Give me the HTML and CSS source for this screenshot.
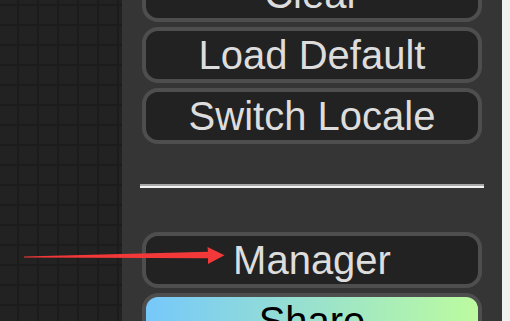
FILE: index.html
```html
<!DOCTYPE html>
<html>
<head>
<meta charset="utf-8">
<link rel="stylesheet" href="styles.css">
</head>
<body>
<div class="app">
  <div class="canvas"></div>
  <div class="panel">
    <div class="menu">
      <button class="btn">Clear</button>
      <button class="btn">Load Default</button>
      <button class="btn">Switch Locale</button>
      <hr class="sep">
      <button class="btn">Manager</button>
      <button class="btn share">Share</button>
    </div>
  </div>
  <div class="strip"></div>
  <svg class="arrow" width="510" height="321" viewBox="0 0 510 321">
    <polygon points="24,256.6 208,251.8 207.5,247 224.5,255.2 208,264 208,258.3 24,257.4" fill="#f23838"/>
  </svg>
</div>
</body>
</html>
```

FILE: styles.css
```css
html, body {
  margin: 0;
  padding: 0;
  width: 510px;
  height: 321px;
  overflow: hidden;
  background: #222;
}

.app {
  position: relative;
  display: flex;
  width: 510px;
  height: 321px;
  overflow: hidden;
}

.canvas {
  width: 122px;
  flex: none;
  background-color: #222222;
  background-image:
    linear-gradient(to right, #1c1c1c 0, #1c1c1c 2px, transparent 2px),
    linear-gradient(to bottom, #1c1c1c 0, #1c1c1c 2px, transparent 2px);
  background-size: 20px 20px, 20px 20px;
  background-position: 17px 0, 0 4px;
}

.panel {
  width: 380px;
  flex: none;
  background: #353535;
  overflow: hidden;
}

.menu {
  display: flex;
  flex-direction: column;
  gap: 5px;
  padding: 0 20px;
  margin-top: -34px;
}

.btn {
  box-sizing: border-box;
  height: 56px;
  width: 100%;
  margin: 0;
  padding: 0;
  background: #222222;
  color: #dddddd;
  border: 4px solid #4e4e4e;
  border-radius: 16px;
  font-family: "Liberation Sans", Arial, sans-serif;
  font-size: 40px;
  line-height: 46px;
  text-align: center;
}

.share {
  background: linear-gradient(90deg, #76c8fb 0%, #bcfb9f 100%);
  color: #000;
}

.sep {
  box-sizing: border-box;
  height: 4px;
  margin: 35px -2px 39px;
  border: 0;
  border-top: 2px solid #a8a8a8;
  border-bottom: 2px solid #f2f2f2;
}

.strip {
  flex: 1;
  background: #f1f1f1;
}

.arrow {
  position: absolute;
  left: 0;
  top: 0;
  pointer-events: none;
}
```
